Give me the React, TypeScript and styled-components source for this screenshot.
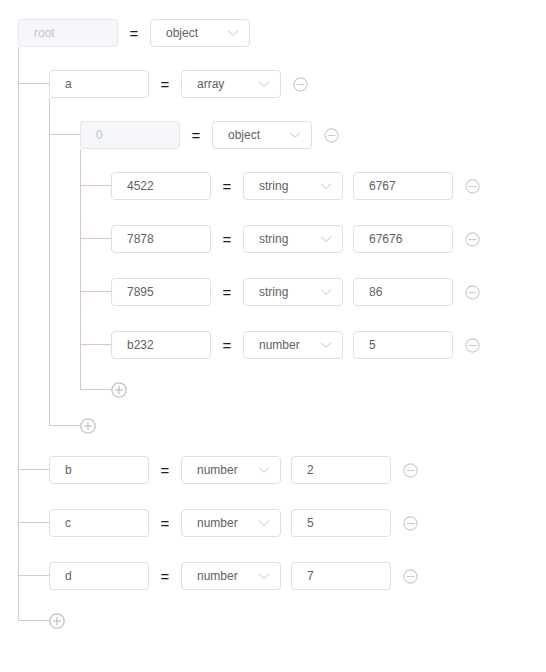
import styled, { createGlobalStyle } from "styled-components";

type JsonNode = {
    key: string;
    type: string;
    value?: string;
    locked?: boolean;
    children?: JsonNode[];
};

const tree: JsonNode = {
    key: "root",
    type: "object",
    locked: true,
    children: [
        {
            key: "a",
            type: "array",
            children: [
                {
                    key: "0",
                    type: "object",
                    locked: true,
                    children: [
                        { key: "4522", type: "string", value: "6767" },
                        { key: "7878", type: "string", value: "67676" },
                        { key: "7895", type: "string", value: "86" },
                        { key: "b232", type: "number", value: "5" },
                    ],
                },
            ],
        },
        { key: "b", type: "number", value: "2" },
        { key: "c", type: "number", value: "5" },
        { key: "d", type: "number", value: "7" },
    ],
};

const LINE = "#dac6c6";
const INDENT = 31;

export default function App() {
    return (
        <>
            <GlobalStyle />
            <Editor>
                <TreeNode node={tree} root />
            </Editor>
        </>
    );
}

function TreeNode({ node, root }: { node: JsonNode; root?: boolean }) {
    const isLeaf = !node.children;
    const content = (
        <>
            <Row $leaf={isLeaf}>
                <Field $locked={node.locked}>{node.key}</Field>
                <Equals>=</Equals>
                <Select>
                    <span>{node.type}</span>
                    <Chevron />
                </Select>
                {isLeaf && <Value>{node.value}</Value>}
                {!root && (
                    <IconButton>
                        <MinusIcon />
                    </IconButton>
                )}
            </Row>
            {node.children && (
                <Children>
                    {node.children.map((child) => (
                        <TreeNode key={child.key} node={child} />
                    ))}
                    <Item $gap={21} $elbow={8}>
                        <AddRow>
                            <PlusIcon />
                        </AddRow>
                    </Item>
                </Children>
            )}
        </>
    );

    if (root) return <div>{content}</div>;
    return (
        <Item $gap={23} $elbow={14}>
            {content}
        </Item>
    );
}

function Chevron() {
    return (
        <svg width="12" height="12" viewBox="0 0 12 12">
            <path d="M1 3.8 L6 8.4 L11 3.8" fill="none" stroke="#c0c4cc" strokeWidth="1" />
        </svg>
    );
}

function MinusIcon() {
    return (
        <svg width="15" height="15" viewBox="0 0 15 15">
            <circle cx="7.5" cy="7.5" r="6.6" fill="none" stroke="#c8cacf" strokeWidth="1.1" />
            <line x1="3.6" y1="7.5" x2="11.4" y2="7.5" stroke="#c8cacf" strokeWidth="1.1" />
        </svg>
    );
}

function PlusIcon() {
    return (
        <svg width="16" height="16" viewBox="0 0 16 16">
            <circle cx="8" cy="8" r="7.2" fill="none" stroke="#bfc1c6" strokeWidth="1.3" />
            <line x1="4" y1="8" x2="12" y2="8" stroke="#bfc1c6" strokeWidth="1.3" />
            <line x1="8" y1="4" x2="8" y2="12" stroke="#bfc1c6" strokeWidth="1.3" />
        </svg>
    );
}

const GlobalStyle = createGlobalStyle`
    body {
        margin: 0;
        background: #ffffff;
        font-family: "Liberation Sans", Arial, sans-serif;
    }
`;

const Editor = styled.div`
    padding: 19px 18px;
`;

const Row = styled.div<{ $leaf?: boolean }>`
    display: flex;
    align-items: flex-start;
    height: ${({ $leaf }) => ($leaf ? "30px" : "28px")};
`;

const Item = styled.div<{ $gap: number; $elbow: number }>`
    position: relative;
    margin-top: ${({ $gap }) => $gap}px;

    &::before {
        content: "";
        position: absolute;
        left: -${INDENT}px;
        top: -${({ $gap }) => $gap}px;
        width: ${INDENT}px;
        height: ${({ $gap, $elbow }) => $gap + $elbow}px;
        border-left: 1px solid ${LINE};
        border-bottom: 1px solid ${LINE};
        box-sizing: border-box;
    }

    &:not(:last-child)::after {
        content: "";
        position: absolute;
        left: -${INDENT}px;
        top: ${({ $elbow }) => $elbow}px;
        bottom: 0;
        border-left: 1px solid ${LINE};
    }
`;

const Children = styled.div`
    padding-left: ${INDENT}px;
`;

const Field = styled.div<{ $locked?: boolean }>`
    box-sizing: border-box;
    width: 100px;
    height: 28px;
    padding: 0 15px;
    border: 1px solid ${({ $locked }) => ($locked ? "#e4e7ed" : "#dcdfe6")};
    border-radius: 4px;
    background: ${({ $locked }) => ($locked ? "#f5f7fa" : "#ffffff")};
    color: ${({ $locked }) => ($locked ? "#c0c4cc" : "#606266")};
    font-size: 12px;
    line-height: 26px;
    white-space: nowrap;
`;

const Equals = styled.span`
    width: 32px;
    text-align: center;
    font-size: 15px;
    line-height: 30px;
    color: #1f1f1f;
`;

const Select = styled(Field)`
    display: flex;
    align-items: center;
    justify-content: space-between;
    padding-right: 10px;
`;

const Value = styled(Field)`
    margin-left: 10px;
`;

const IconButton = styled.span`
    display: flex;
    align-items: center;
    height: 28px;
    margin-left: 12px;
`;

const AddRow = styled.div`
    display: flex;
    align-items: center;
    height: 15px;
`;
